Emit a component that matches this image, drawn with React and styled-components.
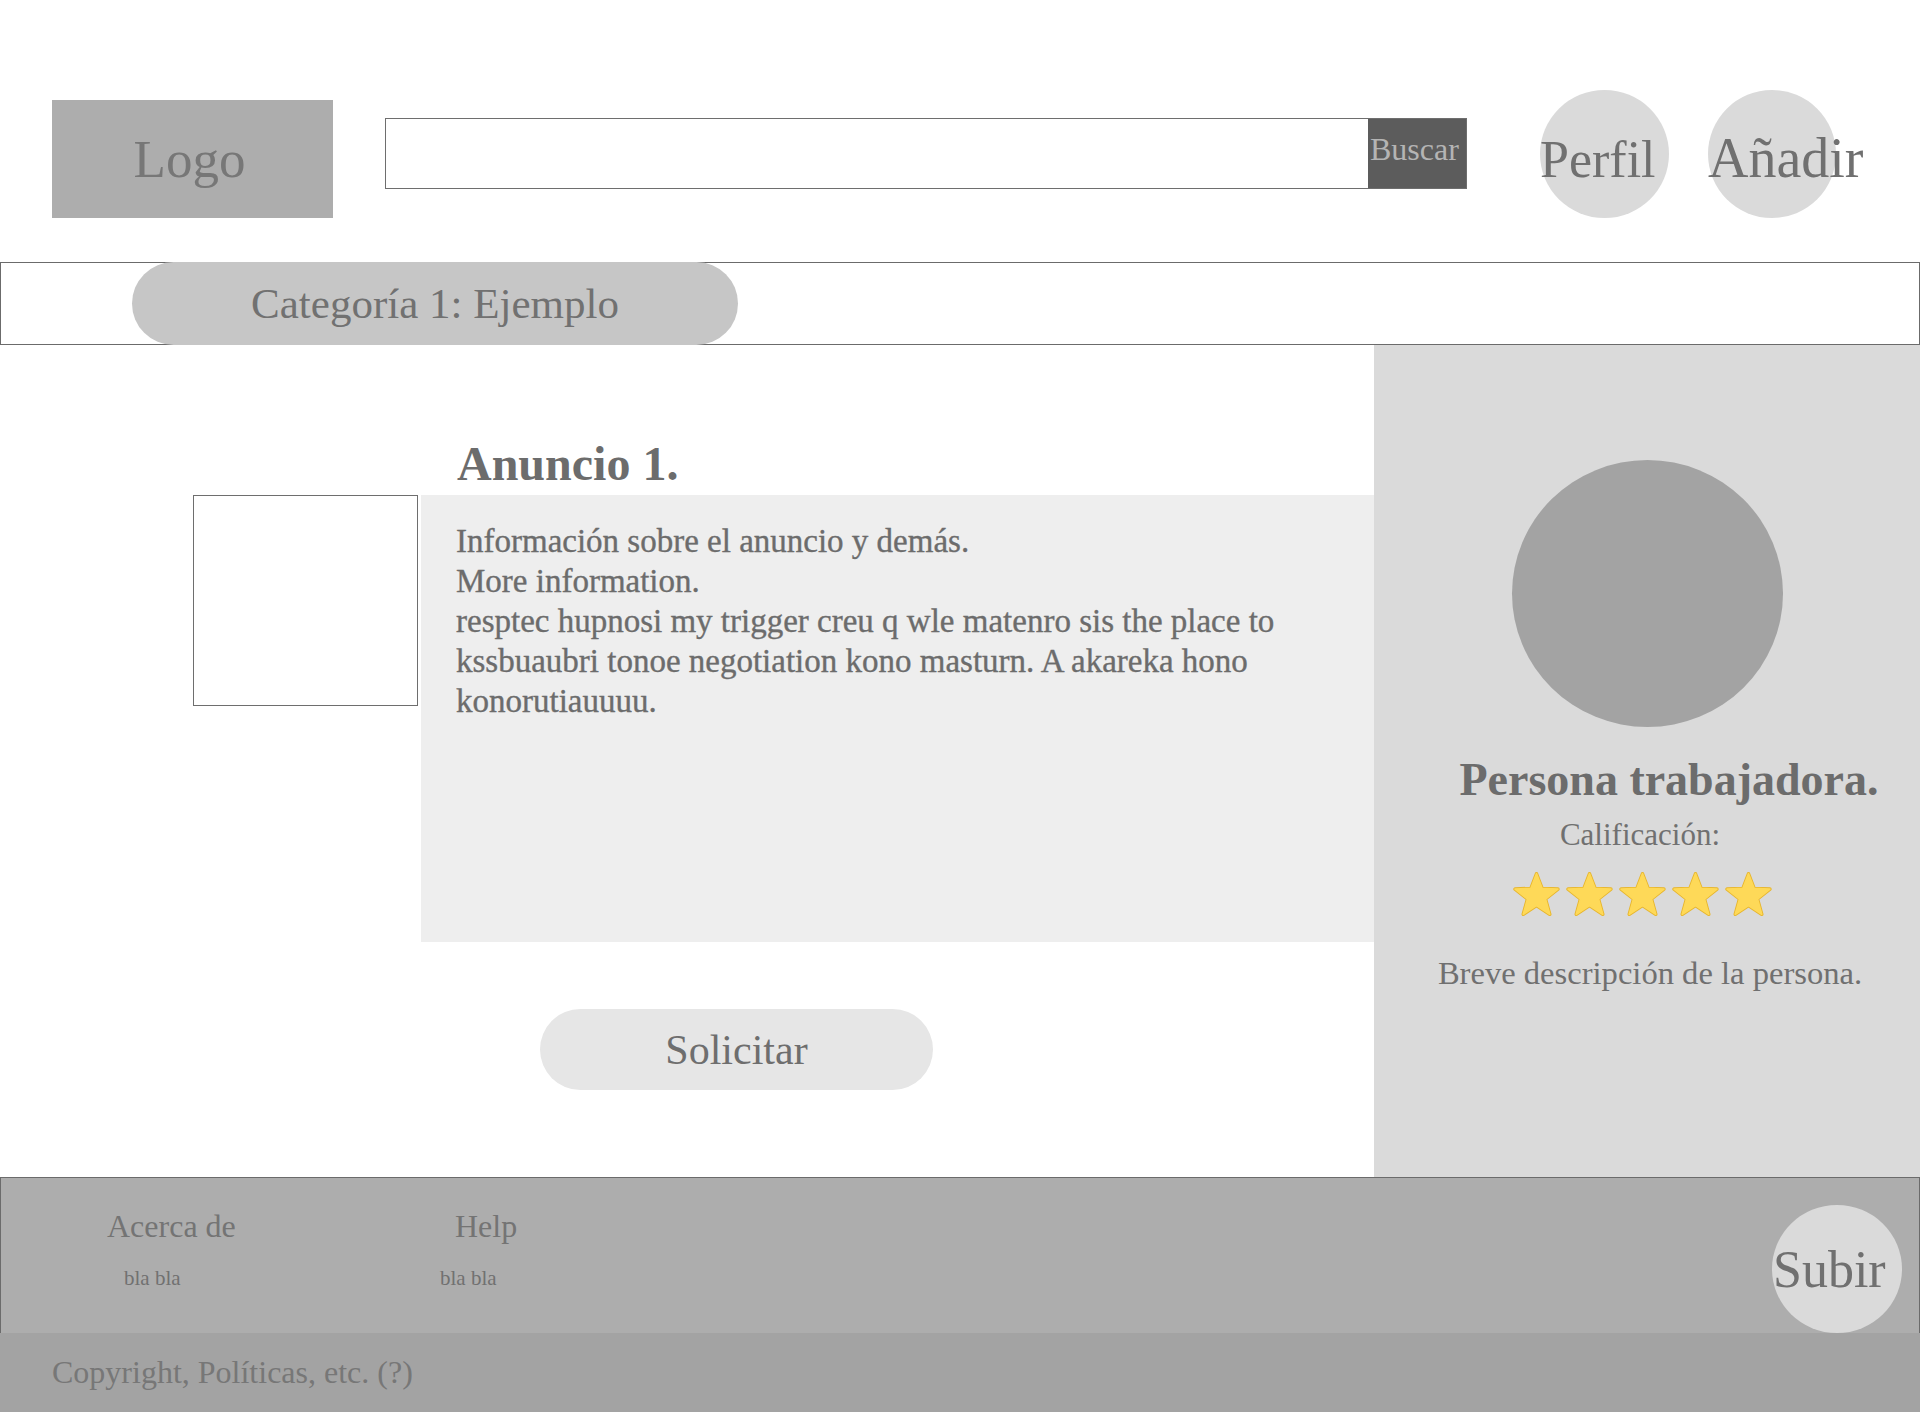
import React from "react";
import styled, { createGlobalStyle } from "styled-components";

const GlobalStyle = createGlobalStyle`
  html, body { margin: 0; padding: 0; background: #ffffff; }
  body { font-family: "Liberation Serif", "Times New Roman", serif; color: #707070; }
  * { box-sizing: border-box; }
`;

const Page = styled.div`
  width: 1920px;
  min-height: 1412px;
  display: flex;
  flex-direction: column;
  overflow: hidden;
`;

const Header = styled.header`
  height: 262px;
  display: flex;
  align-items: flex-start;
`;

const Logo = styled.div`
  margin: 100px 0 0 52px;
  width: 281px;
  height: 118px;
  background: #adadad;
  display: flex;
  align-items: center;
  justify-content: center;
  padding-right: 6px;
  font-size: 53px;
  line-height: 60px;
  color: #777777;
`;

const SearchForm = styled.form`
  margin: 118px 0 0 52px;
  width: 1082px;
  height: 71px;
  border: 1px solid #6e6e6e;
  display: flex;
  background: #fff;
`;

const SearchInput = styled.input`
  flex: 1;
  border: none;
  outline: none;
  background: transparent;
  font-family: inherit;
  font-size: 28px;
`;

const SearchButton = styled.button`
  width: 98px;
  border: none;
  margin: 0;
  background: #5c5c5c;
  color: #b4b4b4;
  font-family: inherit;
  font-size: 32px;
  line-height: 32px;
  text-align: left;
  padding: 14px 0 0 2px;
  align-self: stretch;
  display: flex;
  align-items: flex-start;
`;

const CircleButton = styled.button`
  margin: ${(p) => p.$top}px 0 0 ${(p) => p.$left}px;
  width: ${(p) => p.$w || 128}px;
  height: 128px;
  flex-shrink: 0;
  border: none;
  border-radius: 50%;
  background: #dadada;
  color: #707070;
  font-family: "Liberation Serif", serif;
  font-size: ${(p) => p.$size || 52}px;
  line-height: 60px;
  padding: ${(p) => p.$pad}px 0 0 ${(p) => p.$indent || 0}px;
  display: flex;
  align-items: flex-start;
  justify-content: flex-start;
  white-space: nowrap;
  overflow: visible;
`;

const CategoryBar = styled.nav`
  height: 83px;
  border: 1px solid #6b6b6b;
  display: flex;
`;

const CategoryPill = styled.div`
  margin: -1px 0 -1px 131px;
  width: 606px;
  border-radius: 42px;
  background: #c6c6c6;
  display: flex;
  align-items: center;
  justify-content: center;
  font-size: 43px;
  color: #717171;
`;

const Main = styled.main`
  height: 832px;
  display: flex;
`;

const Content = styled.section`
  flex: 1;
  display: flex;
  flex-direction: column;
  align-items: flex-start;
`;

const AdTitle = styled.h1`
  margin: 91px 0 3px 457px;
  font-size: 48px;
  line-height: 56px;
  font-weight: 700;
  color: #6c6c6c;
`;

const AdRow = styled.div`
  display: flex;
  align-items: flex-start;
  align-self: stretch;
  height: 447px;
`;

const ImageBox = styled.div`
  margin-left: 193px;
  width: 225px;
  height: 211px;
  border: 1px solid #6e6e6e;
  background: #fff;
  flex-shrink: 0;
`;

const InfoPanel = styled.div`
  margin-left: 3px;
  flex: 1;
  align-self: stretch;
  background: #eeeeee;
  padding: 26px 50px 0 35px;
  font-size: 33px;
  line-height: 40px;
  color: #6c6c6c;
  -webkit-text-stroke: 0.35px #6c6c6c;
`;

const InfoLine = styled.div``;

const RequestButton = styled.button`
  margin: 67px 0 0 540px;
  width: 393px;
  height: 81px;
  border: none;
  border-radius: 41px;
  background: #e6e6e6;
  color: #6e6e6e;
  font-family: "Liberation Serif", serif;
  font-size: 42px;
  display: flex;
  align-items: center;
  justify-content: center;
  padding: 0;
`;

const Sidebar = styled.aside`
  width: 546px;
  background: #dadada;
  display: flex;
  flex-direction: column;
  align-items: center;
  padding-top: 115px;
`;

const Avatar = styled.div`
  width: 271px;
  height: 267px;
  border-radius: 50%;
  background: #a3a3a3;
`;

const WorkerName = styled.h2`
  margin: 25px 0 0;
  padding-left: 44px;
  font-size: 46px;
  line-height: 55px;
  font-weight: 700;
  color: #6c6c6c;
  white-space: nowrap;
`;

const RatingLabel = styled.div`
  margin-top: 10px;
  padding-right: 14px;
  font-size: 31px;
  line-height: 36px;
  color: #707070;
`;

const Stars = styled.div`
  margin-top: 19px;
  display: flex;
  gap: 6px;
  padding-right: 10px;
`;

const Description = styled.p`
  margin: 37px 0 0;
  padding-left: 6px;
  font-size: 32.6px;
  line-height: 38px;
  color: #707070;
  white-space: nowrap;
`;

const FooterTop = styled.footer`
  height: 156px;
  border: 1px solid #6b6b6b;
  border-bottom: none;
  background: #adadad;
  display: flex;
  align-items: flex-start;
`;

const FooterColumn = styled.div`
  padding: 29px 0 0 ${(p) => p.$left}px;
  width: ${(p) => p.$w}px;
  display: flex;
  flex-direction: column;
`;

const FooterHeading = styled.div`
  font-size: 32px;
  line-height: 38px;
  color: #747474;
  padding-left: ${(p) => p.$indent || 0}px;
`;

const FooterText = styled.div`
  margin-top: 21px;
  font-size: 21px;
  line-height: 24px;
  color: #717171;
  padding-left: ${(p) => p.$indent || 0}px;
`;

const Spacer = styled.div`
  flex: 1;
`;

const BackToTop = styled(CircleButton)`
  align-self: flex-end;
  margin: 0 17px 0 0;
`;

const FooterBottom = styled.div`
  height: 79px;
  background: #a3a3a3;
  padding: 20px 0 0 52px;
  font-size: 32px;
  line-height: 38px;
  color: #777777;
`;

const STAR_POINTS =
  "12,0.9 14.84,8.39 22.94,8.75 16.59,13.79 18.76,21.6 12,17.13 5.24,21.6 7.41,13.79 1.06,8.75 9.16,8.39";

const Star = () => (
  <svg width="47" height="45" viewBox="0 0 24 23">
    <polygon
      points={STAR_POINTS}
      fill="#e7b52c"
      stroke="#e7b52c"
      strokeWidth="1.8"
      strokeLinejoin="round"
    />
    <polygon
      points={STAR_POINTS}
      fill="#fed958"
      stroke="#fed958"
      strokeWidth="0.9"
      strokeLinejoin="round"
    />
  </svg>
);

export default function App() {
  return (
    <>
      <GlobalStyle />
      <Page>
        <Header>
          <Logo>Logo</Logo>
          <SearchForm onSubmit={(e) => e.preventDefault()}>
            <SearchInput type="text" aria-label="Buscar" />
            <SearchButton type="submit">Buscar</SearchButton>
          </SearchForm>
          <CircleButton $top={90} $left={73} $w={129} $pad={40}>
            Perfil
          </CircleButton>
          <CircleButton $top={90} $left={39} $pad={38} $size={56}>
            Añadir
          </CircleButton>
        </Header>

        <CategoryBar>
          <CategoryPill>Categoría 1: Ejemplo</CategoryPill>
        </CategoryBar>

        <Main>
          <Content>
            <AdTitle>Anuncio 1.</AdTitle>
            <AdRow>
              <ImageBox />
              <InfoPanel>
                <InfoLine>Información sobre el anuncio y demás.</InfoLine>
                <InfoLine>More information.</InfoLine>
                <InfoLine>
                  resptec hupnosi my trigger creu q wle matenro sis the place to
                  kssbuaubri tonoe negotiation kono masturn. A akareka hono
                  konorutiauuuu.
                </InfoLine>
              </InfoPanel>
            </AdRow>
            <RequestButton>Solicitar</RequestButton>
          </Content>

          <Sidebar>
            <Avatar />
            <WorkerName>Persona trabajadora.</WorkerName>
            <RatingLabel>Calificación:</RatingLabel>
            <Stars>
              <Star />
              <Star />
              <Star />
              <Star />
              <Star />
            </Stars>
            <Description>Breve descripción de la persona.</Description>
          </Sidebar>
        </Main>

        <FooterTop>
          <FooterColumn $left={106} $w={439}>
            <FooterHeading>Acerca de</FooterHeading>
            <FooterText $indent={17}>bla bla</FooterText>
          </FooterColumn>
          <FooterColumn $left={0} $w={300}>
            <FooterHeading $indent={15}>Help</FooterHeading>
            <FooterText>bla bla</FooterText>
          </FooterColumn>
          <Spacer />
          <BackToTop $w={130} $pad={35} $indent={1}>
            Subir
          </BackToTop>
        </FooterTop>
        <FooterBottom>Copyright, Políticas, etc. (?)</FooterBottom>
      </Page>
    </>
  );
}
